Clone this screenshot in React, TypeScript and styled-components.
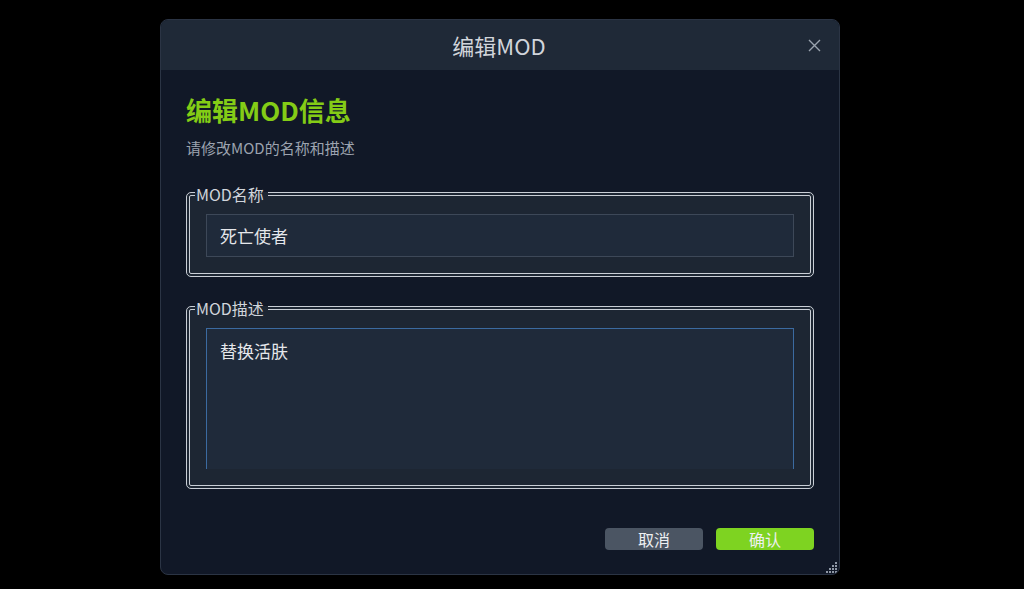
import { FC, useEffect, useRef } from "react"
import styled, { createGlobalStyle } from "styled-components"

const GlobalStyle = createGlobalStyle`
  html, body {
    margin: 0;
    padding: 0;
    background: #000;
    font-family: "Noto Sans CJK SC", "Noto Sans", sans-serif;
  }
`

const App: FC = () => {
  const areaRef = useRef<HTMLTextAreaElement>(null)

  useEffect(() => {
    const el = areaRef.current
    if (!el) return
    el.focus()
    el.setSelectionRange(el.value.length, el.value.length)
  }, [])

  return (
    <>
      <GlobalStyle />
      <Page>
        <Dialog>
          <Header>
            <HeaderTitle>编辑MOD</HeaderTitle>
            <CloseButton aria-label="close">
              <svg width="13" height="13" viewBox="0 0 13 13">
                <path d="M1 1 L12 12 M12 1 L1 12" stroke="#9aa3ae" strokeWidth="1.4" />
              </svg>
            </CloseButton>
          </Header>

          <Body>
            <Title>编辑MOD信息</Title>
            <Subtitle>请修改MOD的名称和描述</Subtitle>

            <Group>
              <Legend>MOD名称</Legend>
              <TextInput defaultValue="死亡使者" />
            </Group>

            <Group $Gap={21}>
              <Legend>MOD描述</Legend>
              <TextArea ref={areaRef} defaultValue="替换活肤" />
            </Group>

            <Actions>
              <Button $Variant="cancel">取消</Button>
              <Button $Variant="ok">确认</Button>
            </Actions>
          </Body>

          <Grip width="12" height="12" viewBox="0 0 12 12">
            {[
              [10, 2], [10, 5], [7, 5], [10, 8], [7, 8], [4, 8],
              [10, 11], [7, 11], [4, 11], [1, 11],
            ].map(([x, y]) => (
              <rect key={`${x}-${y}`} x={x - 1} y={y - 1} width="2" height="2" fill="#8f98a6" />
            ))}
          </Grip>
        </Dialog>
      </Page>
    </>
  )
}

export default App

const Page = styled.div`
  width: 1024px;
  height: 589px;
  display: flex;
  justify-content: flex-start;
  align-items: flex-start;
  padding: 19px 0 0 160px;
  box-sizing: border-box;
  background: #000;
`

const Dialog = styled.div`
  position: relative;
  width: 680px;
  height: 556px;
  display: flex;
  flex-direction: column;
  background: #111827;
  border: 1px solid #2b3444;
  border-radius: 8px;
  overflow: hidden;
  box-sizing: border-box;
`

const Header = styled.div`
  position: relative;
  height: 50px;
  flex-shrink: 0;
  display: flex;
  align-items: center;
  justify-content: center;
  background: #1f2937;
`

const HeaderTitle = styled.div`
  color: #d1d5db;
  font-size: 22px;
  line-height: 28px;
  margin-left: -2px;
`

const CloseButton = styled.button`
  position: absolute;
  right: 17px;
  top: 50%;
  transform: translateY(-50%);
  width: 16px;
  height: 16px;
  padding: 0;
  border: none;
  background: transparent;
  display: flex;
  align-items: center;
  justify-content: center;
`

const Body = styled.div`
  flex: 1;
  display: flex;
  flex-direction: column;
  padding: 23px 25px 0 25px;
`

const Title = styled.h2`
  margin: 0;
  color: #84cc16;
  font-size: 26px;
  font-weight: 700;
  line-height: 34px;
`

const Subtitle = styled.p`
  margin: 11px 0 0;
  color: #9ca3af;
  font-size: 15px;
  line-height: 20px;
`

const Group = styled.fieldset<{ $Gap?: number }>`
  margin: ${({ $Gap }) => $Gap ?? 26}px 0 0;
  padding: 10px 16px 16px;
  border: 4px double #c9ced6;
  border-radius: 5px;
  background: #1d2633;
  min-width: 0;
`

const Legend = styled.legend`
  padding: 0 4px 0 1px;
  margin-left: -11px;
  color: #d1d5db;
  font-size: 16px;
  line-height: 20px;
`

const TextInput = styled.input`
  display: block;
  width: 100%;
  height: 43px;
  box-sizing: border-box;
  padding: 0 13px;
  background: #1f2a3a;
  border: 1px solid #3d4858;
  color: #e5e7eb;
  font-family: "Noto Sans CJK SC", "Noto Sans", sans-serif;
  font-size: 17px;
  outline: none;
`

const TextArea = styled.textarea`
  display: block;
  width: 100%;
  height: 141px;
  box-sizing: border-box;
  padding: 10px 13px;
  background: #1f2a3a;
  border: 1px solid #3b6aa0;
  border-bottom: none;
  color: #e5e7eb;
  caret-color: #e5e7eb;
  font-family: "Noto Sans CJK SC", "Noto Sans", sans-serif;
  font-size: 17px;
  line-height: 24px;
  resize: none;
  outline: none;
`

const Actions = styled.div`
  display: flex;
  justify-content: flex-end;
  gap: 13px;
  margin-top: 39px;
`

const Button = styled.button<{ $Variant: "cancel" | "ok" }>`
  width: 98px;
  height: 22px;
  padding: 0;
  border: none;
  border-radius: 4px;
  background: ${({ $Variant }) => ($Variant === "ok" ? "#7ed321" : "#4b5563")};
  color: #eef0f2;
  font-family: "Noto Sans CJK SC", "Noto Sans", sans-serif;
  font-size: 16px;
  line-height: 22px;
`

const Grip = styled.svg`
  position: absolute;
  right: 1px;
  bottom: 1px;
`
